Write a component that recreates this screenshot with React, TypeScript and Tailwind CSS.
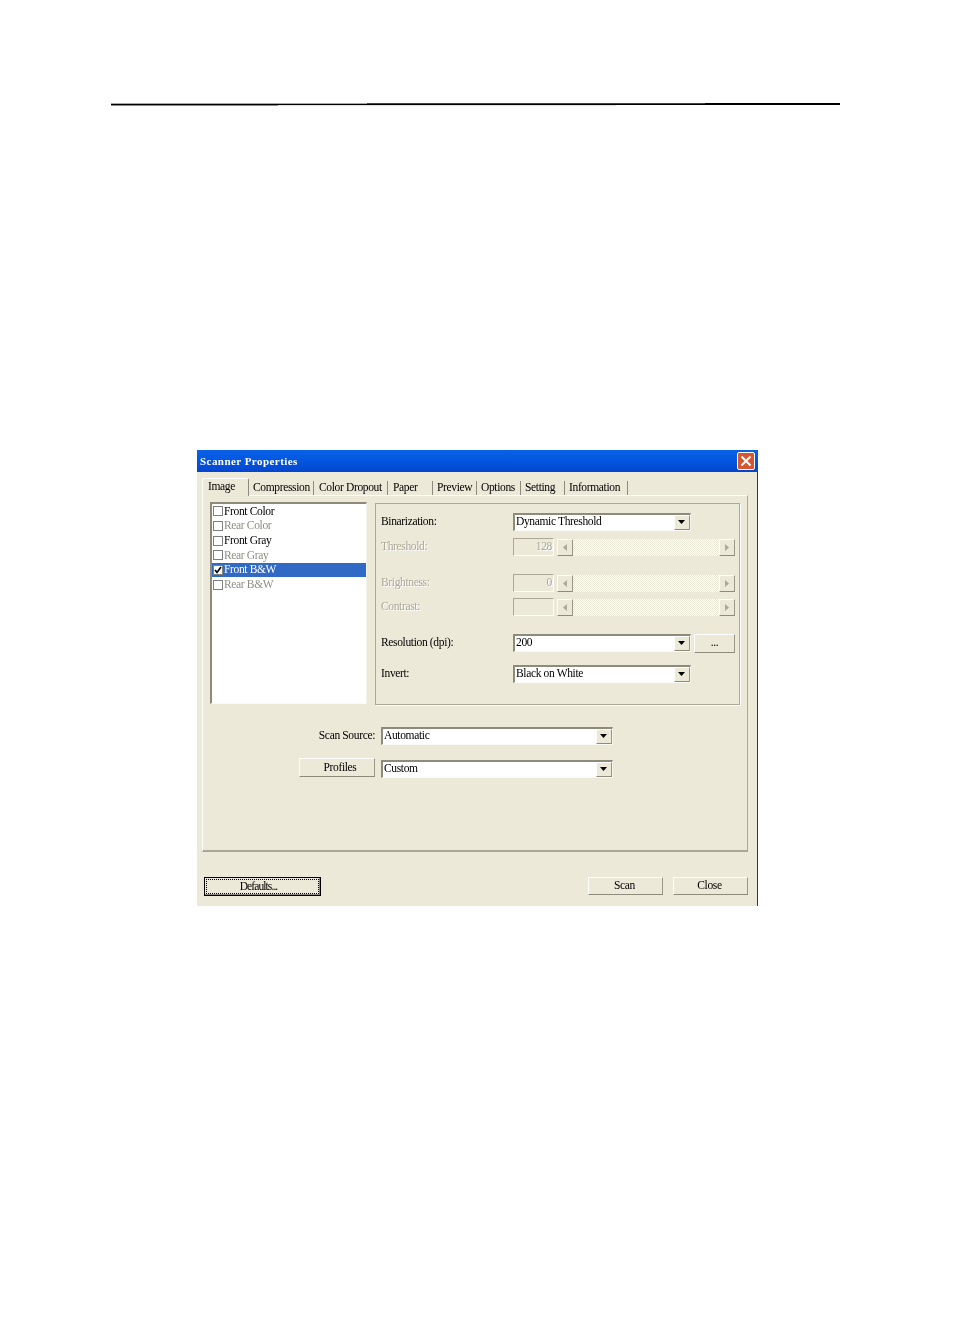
import React from "react";

const sunken = "border-t-2 border-l-2 border-r border-b border-t-[#8e8b7c] border-l-[#8e8b7c] border-r-[#f6f4ea] border-b-[#fbfaf4]";
const raised = "border border-t-white border-l-white border-r-[#9a9788] border-b-[#8e8b7c]";
const dis = "text-[#aca899] [text-shadow:1px_1px_0_#fff]";

function Arrow() {
  return (
    <span className={`flex h-full w-[16px] shrink-0 items-center justify-center bg-[#ece9d8] ${raised}`}>
      <svg width="8" height="5" viewBox="0 0 8 5"><path d="M0 0h7L3.5 4z" fill="#000" /></svg>
    </span>
  );
}

function Combo({ w, value }: { w: string; value: string }) {
  return (
    <div className={`flex items-stretch bg-white ${sunken} ${w} h-[18px]`}>
      <span className="flex-1 pl-[1px] leading-[13px] text-black">{value}</span>
      <Arrow />
    </div>
  );
}

function Scroll() {
  const btn = `flex h-full w-[16px] shrink-0 items-center justify-center bg-[#ece9d8] ${raised}`;
  return (
    <div className="ml-[3px] flex h-[17px] w-[178px] items-stretch">
      <span className={btn}>
        <svg width="5" height="7" viewBox="0 0 5 7"><path d="M4 0v7L0 3.5z" fill="#aca899" /></svg>
      </span>
      <span className="flex-1 bg-[repeating-conic-gradient(#ffffff_0_25%,#ece9d8_0_50%)] bg-[length:2px_2px]" />
      <span className={btn}>
        <svg width="5" height="7" viewBox="0 0 5 7"><path d="M0 0v7l4-3.5z" fill="#aca899" /></svg>
      </span>
    </div>
  );
}

function Edit({ value }: { value?: string }) {
  return (
    <div className={`h-[18px] w-[41px] border border-t-[#aca899] border-l-[#aca899] border-r-white border-b-white pr-[1px] text-right leading-[15px] ${dis}`}>
      {value}
    </div>
  );
}

function SliderRow({ label, value, mt }: { label: string; value?: string; mt: string }) {
  return (
    <div className={`flex h-[18px] items-center ${mt}`}>
      <span className={`w-[137px] pl-[5px] ${dis}`}>{label}</span>
      <Edit value={value} />
      <Scroll />
    </div>
  );
}

function ListRow({ label, on, active, off }: { label: string; on?: boolean; active?: boolean; off?: boolean }) {
  return (
    <div className={`flex h-[14.67px] items-center pl-[1px] ${active ? "bg-[#316ac5] text-white" : off ? "text-[#8f8d84]" : "text-black"}`}>
      <span className="flex h-[10px] w-[10px] items-center justify-center border border-[#7f7f7f] bg-white">
        {on && <svg width="8" height="8" viewBox="0 0 8 8"><path d="M1 4l2 2.4L7 1" fill="none" stroke="#000" strokeWidth="1.7" /></svg>}
      </span>
      <span className="ml-[1px]">{label}</span>
    </div>
  );
}

const tabs: [string, string, string][] = [
  ["Compression", "w-[64px]", "pl-[3px]"],
  ["Color Dropout", "w-[74px]", "pl-[5px]"],
  ["Paper", "w-[45px]", "pl-[5px]"],
  ["Preview", "w-[44px]", "pl-[4px]"],
  ["Options", "w-[44px]", "pl-[4px]"],
  ["Setting", "w-[44px]", "pl-[4px]"],
  ["Information", "w-[63px]", "pl-[4px]"],
];

export default function App() {
  return (
    <div className="h-[1336px] w-[954px] overflow-hidden bg-white pt-[103px] font-['Liberation_Serif',serif] text-[11.5px] leading-none tracking-[-0.35px]">
      <div className="ml-[111px] w-[729px]">
        <div className="flex h-px">
          <span className="w-[256px] bg-[#a8a8a8]" />
          <span className="w-[338px] bg-[#444444]" />
          <span className="flex-1 bg-black" />
        </div>
        <div className="h-px bg-black" />
        <div className="flex h-px">
          <span className="w-[167px] bg-[#888888]" />
          <span className="w-[338px] bg-[#e0e0e0]" />
        </div>
      </div>

      <div className="ml-[197px] mt-[344px] flex h-[456px] w-[561px] flex-col bg-[#ece9d8] blur-[0.35px]">
        <div className="flex h-[22px] shrink-0 items-center justify-between bg-gradient-to-b from-[#0a62e6] via-[#0355e0] to-[#0346cc] pl-[3px] pr-[3px]">
          <span className="text-[11px] font-bold tracking-[0.45px] text-white">Scanner Properties</span>
          <span className="flex h-[18px] w-[18px] items-center justify-center rounded-[2px] border border-white bg-[#d8562f]">
            <svg width="12" height="12" viewBox="0 0 12 12"><path d="M1.5 1.5l9 9M10.5 1.5l-9 9" stroke="#fff" strokeWidth="2" /></svg>
          </span>
        </div>

        <div className="flex flex-1 flex-col border-r border-r-[#0831d9] pl-[5px] pr-[9px]">
          <div className="relative z-10 flex h-[23px] items-end">
            <div className="-mb-[1px] h-[18px] w-[47px] rounded-t-[2px] border-l border-t border-r border-l-white border-t-white border-r-[#8e8b7c] bg-[#ece9d8] pl-[5px] pt-[2px]">
              Image
            </div>
            <div className="flex h-[14px] items-start pl-[1px]">
              {tabs.map(([t, w, p]) => (
                <span key={t} className={`h-[14px] whitespace-nowrap border-r border-r-[#8e8b7c] pt-[1px] ${w} ${p}`}>{t}</span>
              ))}
            </div>
          </div>

          <div className="h-[357px] w-[546px] border border-b-2 border-t-white border-l-white border-r-[#aca899] border-b-[#aca899] pl-[7px] pt-[6px]">
            <div className="flex gap-[8px]">
              <div className={`h-[202px] w-[157px] bg-white ${sunken}`}>
                <ListRow label="Front Color" />
                <ListRow label="Rear Color" off />
                <ListRow label="Front Gray" />
                <ListRow label="Rear Gray" off />
                <ListRow label="Front B&W" on active />
                <ListRow label="Rear B&W" off />
              </div>
              <div className="mt-[1px] h-[202px] w-[365px] border border-[#aca899] [box-shadow:1px_1px_0_#fff]">
                <div className="mt-[9px] flex h-[18px] items-center">
                  <span className="w-[137px] pl-[5px] text-black">Binarization:</span>
                  <Combo w="w-[178px]" value="Dynamic Threshold" />
                </div>
                <SliderRow label="Threshold:" value="128" mt="mt-[7px]" />
                <SliderRow label="Brightness:" value="0" mt="mt-[18px]" />
                <SliderRow label="Contrast:" mt="mt-[6px]" />
                <div className="mt-[18px] flex h-[18px] items-center">
                  <span className="w-[137px] pl-[5px] text-black">Resolution (dpi):</span>
                  <Combo w="w-[178px]" value="200" />
                  <span className={`ml-[3px] flex h-[19px] w-[41px] items-center justify-center ${raised}`}>...</span>
                </div>
                <div className="mt-[13px] flex h-[18px] items-center">
                  <span className="w-[137px] pl-[5px] text-black">Invert:</span>
                  <Combo w="w-[178px]" value="Black on White" />
                </div>
              </div>
            </div>

            <div className="ml-[89px] mt-[22px] flex h-[18px] items-center">
              <span className="w-[76px] text-right">Scan Source:</span>
              <span className="w-[6px]" />
              <Combo w="w-[232px]" value="Automatic" />
            </div>
            <div className="ml-[89px] mt-[15px] flex h-[18px] items-start">
              <span className={`-mt-[2px] flex h-[19px] w-[76px] items-center justify-center pl-[6px] ${raised}`}>Profiles</span>
              <span className="w-[6px]" />
              <Combo w="w-[232px]" value="Custom" />
            </div>
          </div>

          <div className="mt-[25px] flex items-start">
            <div className="ml-[2px] flex h-[19px] w-[117px] items-center justify-center border border-black p-[1px] [box-shadow:inset_-1px_-1px_0_#8e8b7c]">
              <span className="flex h-full w-full items-center justify-center border border-dotted border-black pr-[8px] tracking-[-0.9px]">Defaults...</span>
            </div>
            <div className={`ml-[267px] flex h-[18px] w-[75px] items-center justify-center pr-[2px] ${raised}`}>Scan</div>
            <div className={`ml-[10px] flex h-[18px] w-[75px] items-center justify-center pr-[2px] ${raised}`}>Close</div>
          </div>
        </div>
      </div>
    </div>
  );
}
